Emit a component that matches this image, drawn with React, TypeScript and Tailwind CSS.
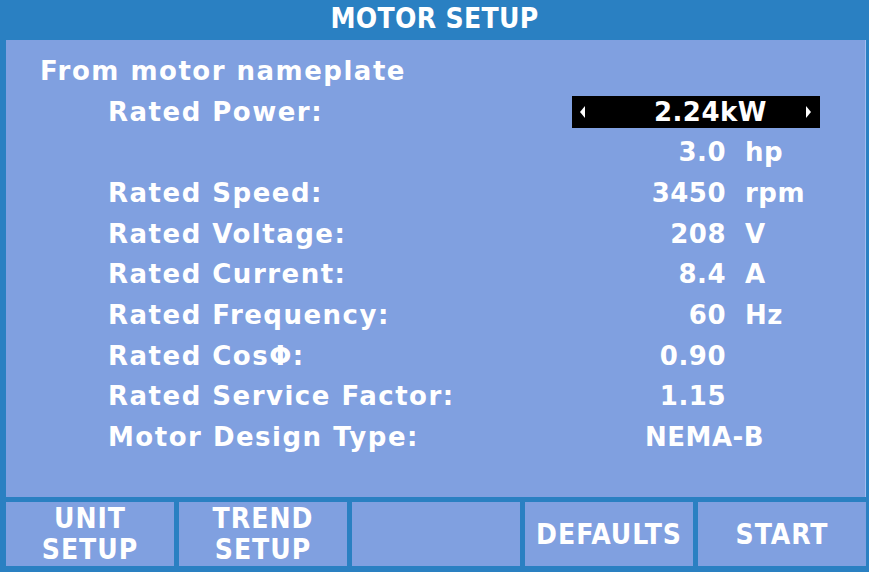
import React from "react";

const ROWS = [
    { label: "Rated Power:", box: true, value: "2.24kW" },
    { label: "", value: "3.0", unit: "hp" },
    { label: "Rated Speed:", value: "3450", unit: "rpm" },
    { label: "Rated Voltage:", value: "208", unit: "V" },
    { label: "Rated Current:", value: "8.4", unit: "A" },
    { label: "Rated Frequency:", value: "60", unit: "Hz" },
    { label: "Rated Cos\u03A6:", value: "0.90", unit: "" },
    { label: "Rated Service Factor:", value: "1.15", unit: "" },
    { label: "Motor Design Type:", text: "NEMA-B" },
];

const KEYS = [["UNIT", "SETUP"], ["TREND", "SETUP"], [], ["DEFAULTS"], ["START"]];

function Arrow({ dir }: { dir: "l" | "r" }) {
    return (
        <svg width="6" height="14" viewBox="0 0 6 14" className="shrink-0">
            {dir === "l" ? (
                <polygon points="5,1 0,7 5,13" fill="white" />
            ) : (
                <polygon points="1,1 6,7 1,13" fill="white" />
            )}
        </svg>
    );
}

export default function App() {
    const body = { fontFamily: '"DejaVu Sans", sans-serif' };
    const narrow = { fontFamily: '"DejaVu Sans Condensed", "DejaVu Sans", sans-serif', fontStretch: "condensed" };

    return (
        <div className="w-[869px] h-[572px] bg-[#2a80c2] flex flex-col overflow-hidden text-white">
            {/* title */}
            <div className="h-[40px] flex items-center justify-center pb-[3px] text-[28px] font-bold tracking-[0.3px]" style={narrow}>
                MOTOR SETUP
            </div>

            {/* main panel */}
            <div className="ml-[6px] mr-[3px] h-[457px] bg-[#80a0e0] border-r border-[#a4bcf0] pt-[11px] font-bold text-[26px] tracking-[1.5px]" style={body}>
                <div className="h-[40.7px] flex items-center pl-[34px]">From motor nameplate</div>
                {ROWS.map((r, i) => (
                    <div key={i} className="h-[40.7px] flex items-center">
                        <div className="w-[566px] pl-[102px]">{r.label}</div>
                        {r.box ? (
                            <div className="w-[248px] h-[32px] bg-black flex items-center pl-[8px] pr-[9px] tracking-[0.5px]">
                                <Arrow dir="l" />
                                <div className="flex-1 text-right pr-[38px]">{r.value}</div>
                                <Arrow dir="r" />
                            </div>
                        ) : r.text ? (
                            <div className="pl-[73px] tracking-[0.5px]">{r.text}</div>
                        ) : (
                            <div className="flex items-center tracking-[0.5px]">
                                <div className="w-[154px] text-right">{r.value}</div>
                                <div className="pl-[19px]">{r.unit}</div>
                            </div>
                        )}
                    </div>
                ))}
            </div>

            {/* soft keys */}
            <div className="mt-[5px] ml-[6px] mr-[3px] h-[64px] flex gap-[5px]">
                {KEYS.map((k, i) => (
                    <div key={i} className="flex-1 bg-[#80a0e0] flex flex-col items-center justify-center text-[28px] font-bold leading-[31px] tracking-[1px]" style={narrow}>
                        {k.map((l) => (
                            <span key={l}>{l}</span>
                        ))}
                    </div>
                ))}
            </div>
        </div>
    );
}
